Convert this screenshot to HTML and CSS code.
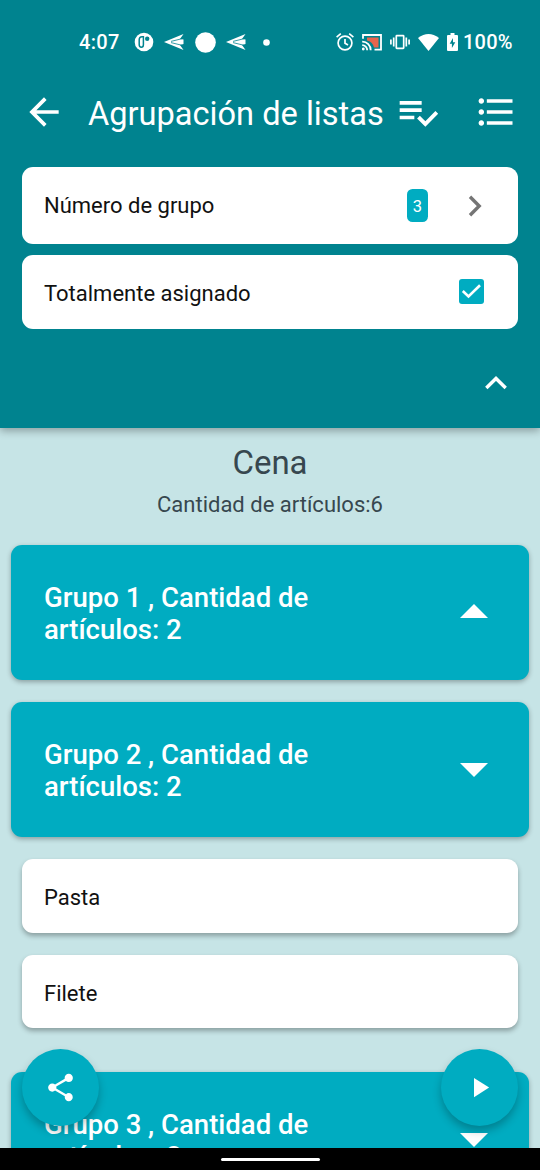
FILE: index.html
```html
<!DOCTYPE html>
<html lang="es">
  <head>
    <meta charset="utf-8">
    <title>Agrupación de listas</title>
    <link rel="stylesheet" href="styles.css">
  </head>
  <body>
    <div class="screen">
      <header class="header">
        <div class="status-bar">
          <span class="time">4:07</span>
          <div class="notifications">
            <svg width="20" height="20" viewBox="0 0 20 20">
              <circle cx="10" cy="10" r="9.3" fill="#fff"/>
              <path d="M9.4 4.7H8Q5.2 4.7 5.2 7.800V12.500Q5.200 15.200 7.300 15.200Q9.400 15.200 9.400 12.700Z" fill="none" stroke="#00838f" stroke-width="1.500"/>
              <circle cx="13.200" cy="6.800" r="2.200" fill="#00838f"/>
            </svg>
            <svg width="20" height="16" viewBox="0 0 20 16">
              <path d="M0 8L19.500 0L16 5L19.500 5.500V10L16 11L19.500 16Z" fill="#fff"/>
              <path d="M7 7.400L18 4.700M7 8.600L18 11.300" stroke="#00838f" stroke-width=".8"/>
            </svg>
            <svg width="21" height="21" viewBox="0 0 21 21">
              <circle cx="10.500" cy="10.500" r="10.300" fill="#fff"/>
            </svg>
            <svg width="20" height="16" viewBox="0 0 20 16">
              <path d="M0 8L19.500 0L16 5L19.500 5.500V10L16 11L19.500 16Z" fill="#fff"/>
              <path d="M7 7.400L18 4.700M7 8.600L18 11.300" stroke="#00838f" stroke-width=".8"/>
            </svg>
            <svg class="more-dot" width="7" height="7" viewBox="0 0 7 7">
              <circle cx="3.500" cy="3.500" r="3.300" fill="#fff"/>
            </svg>
          </div>
          <div class="system">
            <svg width="18" height="18" viewBox="0 0 18 18" fill="none" stroke="#fff" stroke-width="1.700">
              <circle cx="9" cy="10" r="6.900"/>
              <path d="M9 6V10.200L12 12M.6 4.100L4.800.7M17.400 4.100L13.200.7"/>
            </svg>
            <svg width="20" height="17" viewBox="0 0 20 17" fill="none" stroke="#fff" stroke-width="1.800">
              <path d="M5 3.500H16.500V13.500H12Q10.500 7.500 5 6.500Z" fill="#e8654d" stroke="none"/>
              <path d="M1 4.800V1H19V15.700H12.500M.2 7.700A8.300 8.300 0 0 1 8.700 16.200M.2 11.200A5 5 0 0 1 5.200 16.200"/>
              <circle cx="1.300" cy="15" r="1.400" fill="#fff" stroke="none"/>
            </svg>
            <svg width="20" height="16" viewBox="0 0 20 16" fill="none" stroke="#fff" stroke-width="1.700">
              <rect x="6.300" y="1.700" width="7.400" height="12.600" rx=".5"/>
              <path d="M3.700 3.500V12.500M16.300 3.500V12.500M.9 5.500V10.500M19.100 5.500V10.500"/>
            </svg>
            <svg width="21" height="17" viewBox="0 0 21 17">
              <path d="M0 4Q10.500-4 21 4L10.500 17Z" fill="#fff"/>
            </svg>
            <svg class="battery" width="11" height="18" viewBox="0 0 11 18">
              <path d="M3.500 0H7.500V2H10Q11 2 11 3V17Q11 18 10 18H1Q0 18 0 17V3Q0 2 1 2H3.500Z" fill="#fff"/>
              <path d="M6 5L2.700 10.700H4.900V15L8.300 9.200H6Z" fill="#00838f"/>
            </svg>
            <span class="percent">100%</span>
          </div>
        </div>

        <div class="toolbar">
          <svg class="icon" viewBox="0 0 24 24"><path d="M20 11H7.830l5.590-5.590L12 4l-8 8 8 8 1.410-1.410L7.830 13H20v-2z"/></svg>
          <h1>Agrupación de listas</h1>
          <svg class="icon icon-check" viewBox="0 0 24 24"><path d="M14 10H2v2h12v-2zm0-4H2v2h12V6zM2 16h8v-2H2v2zm19.500-4.500L23 13l-6.990 7-4.510-4.500L13 14l3.010 3 5.490-5.500z"/></svg>
          <svg class="icon icon-list" viewBox="0 0 24 24"><path d="M4 10.500c-.83 0-1.500.67-1.500 1.500s.67 1.500 1.500 1.500 1.500-.67 1.500-1.500-.67-1.500-1.500-1.500zm0-6c-.83 0-1.500.67-1.500 1.500S3.170 7.500 4 7.500 5.500 6.830 5.500 6 4.830 4.500 4 4.500zm0 12c-.83 0-1.500.68-1.500 1.500s.68 1.500 1.500 1.500 1.500-.68 1.500-1.500-.67-1.500-1.500-1.500zM7 19h14v-2H7v2zm0-6h14v-2H7v2zm0-8v2h14V5H7z"/></svg>
        </div>

        <div class="options">
          <div class="row row-number">
            <span>Número de grupo</span>
            <span class="badge">3</span>
            <svg class="chevron" width="14" height="22" viewBox="0 0 14 22"><path d="M2 1.800L11.200 11L2 20.200" fill="none" stroke="#757575" stroke-width="3.400"/></svg>
          </div>
          <div class="row">
            <span class="row-label">Totalmente asignado</span>
            <span class="checkbox">
              <svg width="25" height="25" viewBox="0 0 25 25"><path d="M3.800 12L9.500 17.500L21 6.300" fill="none" stroke="#fff" stroke-width="2.600"/></svg>
            </span>
          </div>
        </div>

        <div class="collapse">
          <svg width="22" height="14" viewBox="0 0 22 14"><path d="M1.300 12L11 2.500L20.700 12" fill="none" stroke="#fff" stroke-width="3.400"/></svg>
        </div>
      </header>

      <main class="content">
        <h2>Cena</h2>
        <p class="count">Cantidad de artículos:6</p>

        <div class="group">
          <span>Grupo 1 , Cantidad de artículos: 2</span>
          <svg class="arrow-up" width="28" height="14" viewBox="0 0 28 14"><path d="M0 14L14 0L28 14Z" fill="#fff"/></svg>
        </div>
        <div class="group">
          <span>Grupo 2 , Cantidad de artículos: 2</span>
          <svg class="arrow-down" width="28" height="14" viewBox="0 0 28 14"><path d="M0 0H28L14 14Z" fill="#fff"/></svg>
        </div>
        <div class="item">Pasta</div>
        <div class="item">Filete</div>
        <div class="group group-last">
          <span>Grupo 3 , Cantidad de artículos: 2</span>
          <svg class="arrow-down" width="28" height="14" viewBox="0 0 28 14"><path d="M0 0H28L14 14Z" fill="#fff"/></svg>
        </div>
      </main>

      <div class="fab fab-share">
        <svg width="33" height="33" viewBox="0 0 24 24"><path fill="#fff" d="M18 16.080c-.76 0-1.440.3-1.960.77L8.910 12.700c.05-.23.09-.46.09-.7s-.04-.47-.09-.7l7.050-4.110c.54.5 1.250.81 2.040.81 1.660 0 3-1.340 3-3s-1.340-3-3-3-3 1.340-3 3c0 .24.04.47.09.7L8.040 9.810C7.500 9.310 6.790 9 6 9c-1.660 0-3 1.340-3 3s1.340 3 3 3c.79 0 1.500-.31 2.040-.81l7.120 4.160c-.05.21-.08.43-.08.65 0 1.610 1.310 2.920 2.920 2.920s2.920-1.310 2.920-2.920-1.310-2.920-2.920-2.920z"/></svg>
      </div>
      <div class="fab fab-play">
        <svg width="33" height="33" viewBox="0 0 24 24"><path fill="#fff" d="M8 5v14l11-7z"/></svg>
      </div>

      <div class="nav-bar">
        <div class="nav-handle"></div>
      </div>
    </div>
  </body>
</html>
```
FILE: styles.css
```css
* {
  box-sizing: border-box;
  margin: 0;
  padding: 0;
}

body {
  font-family: Roboto, 'Liberation Sans', sans-serif;
  background: #c6e4e6;
}

svg {
  display: block;
  flex-shrink: 0;
}

.screen {
  position: relative;
  width: 540px;
  height: 1170px;
  overflow: hidden;
  background: #c6e4e6;
}

/* header */
.header {
  position: relative;
  height: 428px;
  background: #00838f;
  box-shadow: 0 3px 8px rgba(0, 0, 0, 0.3);
}

.status-bar {
  display: flex;
  align-items: center;
  height: 84px;
  padding: 0 26px 0 79px;
  color: #fff;
  font-size: 20px;
  font-weight: 500;
}

.time {
  width: 55px;
  letter-spacing: 0.3px;
}

.notifications {
  display: flex;
  align-items: center;
  gap: 10.3px;
}

.more-dot {
  margin-left: 7px;
}

.system {
  display: flex;
  align-items: center;
  gap: 8px;
  margin-left: auto;
}

.percent {
  width: 51px;
  margin-left: -2.5px;
  letter-spacing: 0.2px;
}

.toolbar {
  display: flex;
  align-items: center;
  height: 56px;
  padding: 0 22px;
  color: #fff;
}

.toolbar h1 {
  flex: 1;
  margin-left: 22px;
  padding-top: 4px;
  font-size: 32.6px;
  font-weight: 400;
  line-height: 54px;
  white-space: nowrap;
}

.icon {
  width: 44px;
  height: 44px;
  fill: #fff;
}

.icon-list {
  margin-left: 34px;
}

.options {
  display: flex;
  flex-direction: column;
  gap: 11px;
  padding: 27px 22px 0;
}

.row {
  display: flex;
  align-items: center;
  justify-content: space-between;
  height: 73.5px;
  padding: 0 34.5px 0 22px;
  border-radius: 11px;
  background: #fff;
  color: #111;
  font-size: 22px;
}

.row-number {
  height: 77px;
  padding-right: 36.5px;
}

.row-label {
  padding-top: 3px;
}

.badge {
  width: 21px;
  height: 33px;
  margin-left: auto;
  border-radius: 5.5px;
  background: #00acc1;
  color: #fff;
  font-size: 16.5px;
  line-height: 35px;
  text-align: center;
}

.chevron {
  margin-left: 39.5px;
}

.checkbox {
  width: 25px;
  height: 25px;
  border-radius: 3px;
  background: #00acc1;
}

.collapse {
  display: flex;
  justify-content: flex-end;
  padding: 47.5px 33px 0;
}

/* list */
.content {
  display: flex;
  flex-direction: column;
  padding: 13px 11px 0;
}

.content h2 {
  color: #37474f;
  font-size: 33px;
  font-weight: 400;
  line-height: 44px;
  text-align: center;
}

.count {
  margin-bottom: 21px;
  color: #37474f;
  font-size: 22px;
  line-height: 39px;
  text-align: center;
}

.group {
  display: flex;
  align-items: center;
  justify-content: space-between;
  flex-shrink: 0;
  height: 135px;
  margin-bottom: 22px;
  padding: 0 41px 0 33px;
  border-radius: 11px;
  background: #00acc1;
  box-shadow: 0 2px 5px rgba(0, 0, 0, 0.3);
  color: #fff;
  font-size: 27.5px;
  font-weight: 500;
  line-height: 32px;
}

.group span {
  width: 300px;
  padding-top: 3px;
}

.arrow-up {
  margin-bottom: 3px;
}

.arrow-down {
  margin-top: 1px;
}

.group-last {
  margin-top: 22px;
}

.item {
  height: 73.5px;
  margin: 0 11px 22px;
  padding-left: 22px;
  border-radius: 11px;
  background: #fff;
  box-shadow: 0 3px 5px rgba(0, 0, 0, 0.3);
  color: #111;
  font-size: 22px;
  line-height: 77px;
}

/* floating buttons */
.fab {
  position: absolute;
  top: 1049px;
  display: flex;
  align-items: center;
  justify-content: center;
  width: 77px;
  height: 77px;
  border-radius: 50%;
  background: #00acc1;
  box-shadow: 0 5px 9px rgba(0, 0, 0, 0.25);
}

.fab-share {
  left: 22px;
}

.fab-play {
  right: 22px;
}

.nav-bar {
  position: absolute;
  bottom: 0;
  left: 0;
  display: flex;
  align-items: center;
  justify-content: center;
  width: 100%;
  height: 22px;
  background: #000;
}

.nav-handle {
  width: 99px;
  height: 3px;
  border-radius: 2px;
  background: #fff;
}
```
